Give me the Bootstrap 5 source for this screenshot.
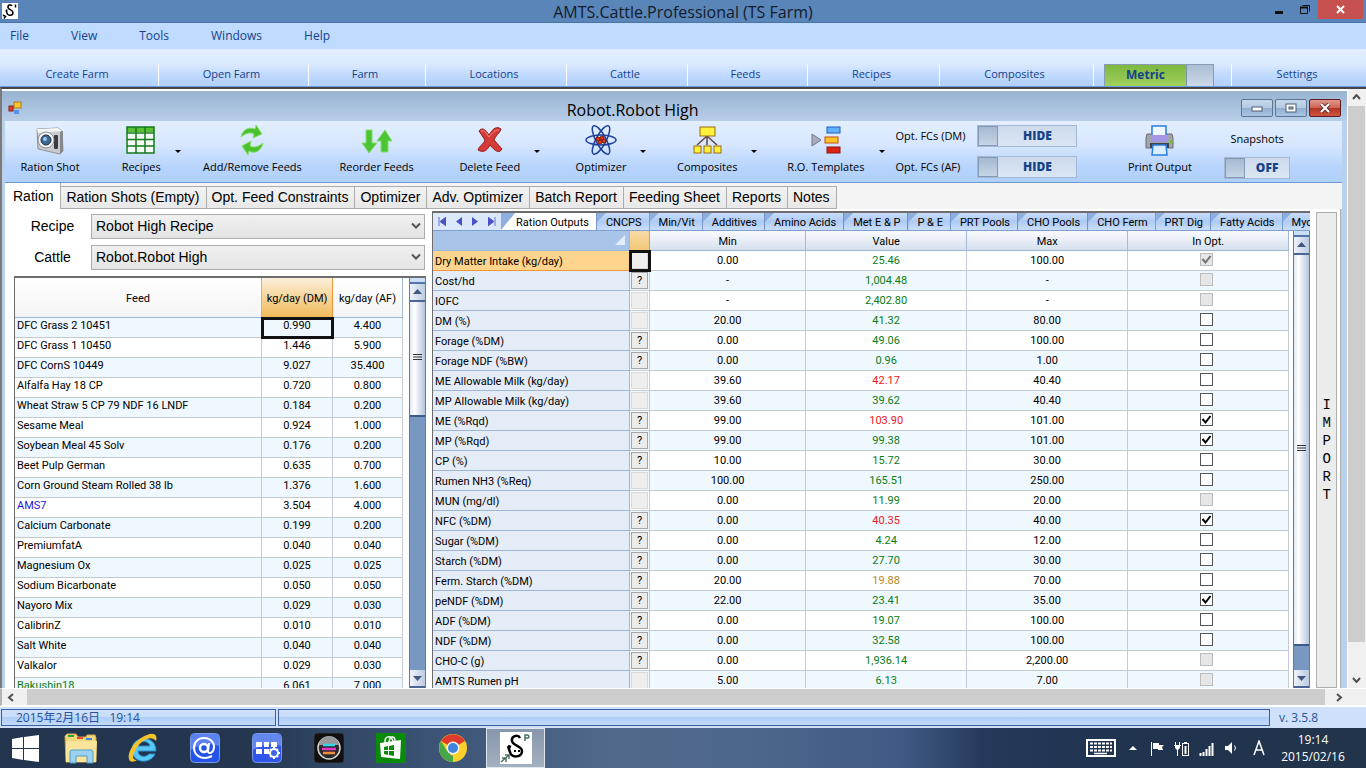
<!DOCTYPE html>
<html lang="en">
<head>
<meta charset="utf-8">
<meta name="viewport" content="width=device-width, initial-scale=1">
<title>AMTS.Cattle.Professional (TS Farm)</title>
<link rel="stylesheet" href="https://cdn.jsdelivr.net/npm/bootstrap@5.3.0/dist/css/bootstrap.min.css">
<style>
  :root { --ui: "Open Sans", "Noto Sans", "Noto Sans CJK JP", sans-serif; --tabs: "Liberation Sans", Arial, sans-serif; --grid: Roboto, "Liberation Sans", sans-serif; --navy: #15428b; }
  body { font-family: var(--ui); font-size: 12px; line-height: 16px; color: #000; background: #f0f0f0; }
  button { font: inherit; color: inherit; padding: 0; border: 0; background: none; }
  svg { display: block; }
  a { color: inherit; text-decoration: none; }

  .app-title { height: 23px; background: #5a85b9; border-bottom: 1px solid #4a74aa; }
  .app-title h1 { font: 16px/25px var(--ui); color: #101c2c; margin: 0; }
  .app-logo { left: 2px; top: 3px; }
  .app-controls { right: 3px; top: 0; }
  .app-controls button { width: 26px; height: 19px; display: grid; place-items: center; }
  .app-controls .app-close { width: 45px; background: #c75050; }

  .app-menu { height: 26px; background: #bfdbff; color: var(--navy); padding: 0 10px; gap: 42px; }
  .farm-bar { height: 39px; display: grid; grid-template-columns: 158fr 150fr 117fr 141fr 121fr 120fr 132fr 154fr 138fr 135fr; font-size: 11px;
    background: linear-gradient(#e3efff, #dbe9fe 40%, #c0dafe 70%, #b1d0fb); border-bottom: 1px solid #6e9cdb; color: var(--navy); }
  .farm-bar button { padding-top: 13px; padding-right: 4px; }
  .farm-bar > * + * { border-left: 1px solid; border-image: linear-gradient(transparent 40%, #fff 45%) 1; }
  .metric-cell { padding-left: 10px; }
  .farm-bar .metric-switch { width: 110px; height: 22px; background: linear-gradient(#7db83f, #a0d05c); border: 1px solid #8a9bb4; border-bottom: 0; font-weight: 700; font-size: 12px; }
  .metric-switch i { width: 27px; background: linear-gradient(#aabdd2, #ccd9e8); border-left: 1px solid #7e93ae; }

  .mdi { border-top: 2px solid #45464a; border-left: 2px solid #7a7a7a; background: #fff; padding-top: 2px; }
  .child { background: #b9d1ea; padding: 0 5px 0 3px; margin-right: 1px; }
  .child-title { height: 30px; background: linear-gradient(#98b3d1, #b7cee8); margin: 0 -5px 0 -3px; padding-right: 84px; }
  .child-title h2 { font: 16px/38px var(--ui); margin: 0; }
  .child-icon { left: 6px; top: 10px; }
  .child-controls { right: 6px; top: 8px; gap: 2px; }
  .child-controls button { width: 32px; height: 18px; display: grid; place-items: center; border: 1px solid #5d7594; border-radius: 2px;
    background: linear-gradient(#c6d8ec, #b4cae3 48%, #91aecf 50%, #a9c5e3); }
  .child-controls .child-close { background: linear-gradient(#e0978b, #cf6656 48%, #b23325 50%, #d0563f); border-color: #5b1d22; }

  .ribbon { height: 62px; display: grid; grid-template-columns: 90fr 92fr 130fr 118fr 108fr 114fr 98fr 139fr 200fr 128fr 66fr 52fr; font-size: 11px;
    background: linear-gradient(#e3efff, #d5e6fe 40%, #b7d4fd 75%, #afd0fb); border-bottom: 1px solid #6e9ad4; }
  .tool { display: flex; flex-direction: column; align-items: center; white-space: nowrap; padding-top: 3px; }
  .tool svg.pic { width: 34px; height: 32px; margin-bottom: 3px; }
  .tool .caret { position: absolute; left: 100%; top: -9px; margin-left: 14px; border: 3px solid transparent; border-top-color: #000; border-bottom: 0; }
  .opt-row { height: 31px; gap: 9px; white-space: nowrap; }
  .opt-row span { width: 73px; }
  .slide { width: 100px; height: 22px; border: 1px solid #a3b8d3; background: linear-gradient(#ccdaec, #dbe6f4); color: var(--navy); font-weight: 700; font-size: 12px; }
  .slide i { width: 20px; background: linear-gradient(#a4b9d1, #c6d5e7); border: 1px solid #8399b5; }
  .slide.short { width: 66px; }
  .snap-box { padding-top: 10px; }

  .main-tabs { height: 26px; background: #f4f4f4; padding-top: 3px; font: 14px/20px var(--tabs); }
  .main-tabs button { background: linear-gradient(#f2f2f2, #e8e8e8); border: 1px solid #acacac; border-left-width: 0; padding: 0 6px 0 5px; white-space: nowrap; height: 23px; }
  .main-tabs button.active { background: #fff; border: 0; border-right: 1px solid #acacac; padding: 0 7px 0 8px; height: 26px; margin-top: -3px; }

  .sheet { display: grid; grid-template-columns: 412fr 878fr 21px; column-gap: 6px; padding: 0 3px 0 9px; background: #fff; border-right: 1px solid #b0b0b0; margin-right: 1px; }
  .pickers { padding-top: 5px; }
  .picker { display: grid; grid-template-columns: 77px 1fr; align-items: center; font: 14px/20px var(--tabs); height: 25px; margin-bottom: 6px; padding-right: 1px; }
  .picker label { text-align: center; }
  .picker .form-select { font: inherit; height: 25px; padding: 0 20px 0 4px; border: 1px solid #acacac; border-radius: 0; color: #000;
    background: url("data:image/svg+xml,%3Csvg xmlns='http://www.w3.org/2000/svg' viewBox='0 0 10 8'%3E%3Cpath d='M1 1.500l4 4 4-4' fill='none' stroke='%23555' stroke-width='2'/%3E%3C/svg%3E") right 3px center/10px 8px no-repeat, linear-gradient(#f0f0f0, #e4e4e4); }

  .pane { border-top: 2px solid #6d6d6d; border-left: 1px solid #6d6d6d; }
  .output-pane { margin-top: 2px; }
  .data-grid { table-layout: fixed; width: 100%; border-collapse: separate; border-spacing: 0; font: 11px/15px var(--grid); }
  .data-grid td, .data-grid tbody th { height: 20px; padding: 0 0 3px; text-align: center; border-right: 1px solid #c4cbd4; border-bottom: 1px solid #c4cbd0; white-space: nowrap; font-weight: 400; background: #fff; }
  .data-grid thead th { font-weight: 400; text-align: center; border-right: 1px solid #a0bad8; border-bottom: 1px solid #9bb7d9; padding: 0; }
  .data-grid .picked { outline: 3px solid #111; outline-offset: -2px; position: relative; }
  .feeds thead th { height: 40px; background: linear-gradient(#fff, #f4f4f5); white-space: nowrap; padding-top: 3px; }
  .feeds thead th.hot { background: linear-gradient(#fbf0db, #f6d498 50%, #f1bb5c); border-right-color: #f29536; }
  .feeds tbody tr:nth-child(odd) td, .outputs tbody tr:nth-child(even) td { background: #eff7ff; }
  .feeds tbody td:first-child { text-align: left; padding-left: 2px; }
  .outputs thead th { height: 20px; background: linear-gradient(#f8fafd, #e8eef6 50%, #d4dfee); padding-top: 3px; }
  .outputs thead th.corner { background: #a9c4e9; padding: 0; }
  .outputs thead th.hot { background: linear-gradient(#f7dba6, #f3c777); border-right-color: #f29536; }
  .outputs tbody td { padding: 0; }
  .outputs tbody td:last-child { padding: 0 4px 2px 0; }
  .outputs tbody th { text-align: left; padding: 3px 0 0 2px; background: #e4ecf7; border-color: #9fb6d4; }
  .outputs tbody tr:first-child th { background: #ffd58d; border-bottom-color: #f29536; }
  .outputs td .hint { display: block; width: 17px; height: 17px; margin: 0 auto; background: #ebebeb; border: 1px solid #a5a5a5; line-height: 16px; }
  .outputs td .hint:disabled { border-color: #d8d8d8; background: #eee; }
  .outputs .form-check-input { display: block; width: 13px; height: 13px; margin: 0 auto; border: 1px solid #555; border-radius: 0; background-color: #fff; opacity: 1; }
  .outputs .form-check-input:checked { background: #fff url("data:image/svg+xml,%3Csvg xmlns='http://www.w3.org/2000/svg' viewBox='0 0 11 11'%3E%3Cpath d='M1.500 5l3 3.500L9.500 2' fill='none' stroke='%23000' stroke-width='2'/%3E%3C/svg%3E") center/11px no-repeat; }
  .outputs .form-check-input:disabled { background-color: #e6e6e6; border-color: #bcbcbc; }
  .outputs .form-check-input:disabled:checked { background-image: url("data:image/svg+xml,%3Csvg xmlns='http://www.w3.org/2000/svg' viewBox='0 0 11 11'%3E%3Cpath d='M1.500 5l3 3.500L9.500 2' fill='none' stroke='%23707070' stroke-width='2'/%3E%3C/svg%3E"); }
  .ok { color: #0a7d14; } .bad { color: #f01818; } .warn { color: #b8891c; }

  .strip { height: 18px; background: #8eafe0; font: 11px/17px var(--grid); border-bottom: 1px solid #7f9fd0; }
  .strip .step { width: 68px; background: #dbe8fa; }
  .strip .leaf { flex: none; padding: 1px 7px 0 9px; white-space: nowrap; height: 17px; background: linear-gradient(#c9dcfa, #aecbf4 50%, #cadefb); clip-path: polygon(9px 0, 100% 0, 100% 100%, 0 100%, 0 9px); border-right: 1px solid #7191c9; }
  .strip .leaf.active { background: #fff; padding-left: 15px; clip-path: polygon(14px 0, 100% 0, 100% 100%, 0 100%); }

  .vbar { width: 17px; background: #7898c1; border-left: 1px solid #5a7bb0; border-right: 1px solid #5a7bb0; }
  .vbar .nip { height: 6px; background: #c9def8; border-bottom: 2px solid #5575a8; }
  .vbar button { height: 18px; display: grid; place-items: center; background: linear-gradient(90deg, #eef3fb, #bccbe0); border-bottom: 2px solid #4a6596; }
  .vbar .thumb { background: linear-gradient(90deg, #dfe8f5, #fff 30%, #b4c4dc); border-bottom: 2px solid #3c5a8e; display: grid; place-items: center; }
  .import-btn { border: 1px solid #adadad; background: #ececec; font: 14px/18px "Liberation Mono", monospace; margin-top: 3px; }

  .page-v { width: 18px; margin-top: -2px; background: #f0f0f0; padding-right: 1px; }
  .page-v button { height: 17px; display: grid; place-items: center; }
  .page-v .rest { height: 46px; }
  .page-v .bar { background: #cdcdcd; }
  .page-h { height: 18px; background: #f0f0f0; border-top: 1px solid #fff; border-bottom: 1px solid #fff; border-left: 2px solid #b5b5b5; }
  .page-h button { width: 25px; display: grid; place-items: center; }
  .page-h .bar { background: #cdcdcd; }

  .app-status { display: grid; grid-template-columns: 275fr 993fr 94fr; height: 22px; padding: 2px 0 2px 1px; gap: 2px; background: #cfe1fa; color: #24539f; border-top: 1px solid #fff; }
  .app-status > div { border: 1px solid #3b5ea3; background: linear-gradient(#cfe0f8, #c8dcf8 45%, #aecdf7 50%, #c4dbfa); line-height: 15px; white-space: pre; }
  .app-status .stamp { padding-left: 14px; }
  .app-status .ver { border-color: transparent; padding-left: 6px; background: none; }

  .taskbar { height: 40px; color: #fff; background: linear-gradient(90deg, #22344e 0, #24374f 18%, #2f4563 24%, #3f587a 34%, #52698a 45%, #4b668c 56%, #3f5a84 66%, #26395a 72%, #203350 80%, #22344a); }
  .taskbar .start { width: 50px; height: 40px; display: grid; place-items: center; }
  .taskbar .pin { width: 62px; height: 40px; display: grid; place-items: center; }
  .taskbar .pin.running { width: 59px; margin-left: 2px; background: linear-gradient(#8797ab, #a3b0c0); border: 1px solid #dfe6ee; }
  .tray { padding-right: 19px; gap: 9px; }
  .tray .clock { font: 12px/17px var(--ui); text-align: center; width: 68px; }
</style>
</head>
<body>
<div class="vh-100 d-flex flex-column overflow-hidden">

  <header class="app-title position-relative text-center">
    <svg class="app-logo position-absolute" width="16" height="16" viewBox="0 0 32 32"><rect width="32" height="32" fill="#fff"/><path d="M20 6c-2-4-9-2-8 3s10 5 10 10c0 7-11 7-12 1l-2-6M8 14l3 1M27 3v6M2 24l5 3-3 4" fill="none" stroke="#000" stroke-width="3"/></svg>
    <h1>AMTS.Cattle.Professional (TS Farm)</h1>
    <div class="app-controls position-absolute d-flex">
      <button aria-label="Minimize"><svg width="10" height="10"><path d="M1 7.500h8" stroke="#111" stroke-width="3"/></svg></button>
      <button aria-label="Restore"><svg width="12" height="11"><path d="M1.500 3.500h7v6h-7zM3.500 1.500h7v6" fill="none" stroke="#111"/><path d="M1 3.500h8" stroke="#111" stroke-width="2"/></svg></button>
      <button class="app-close" aria-label="Close"><svg width="9" height="9"><path d="M1 1l7 7M8 1L1 8" stroke="#fff" stroke-width="2"/></svg></button>
    </div>
  </header>

  <nav class="app-menu d-flex align-items-center"><a href="#">File</a><a href="#">View</a><a href="#">Tools</a><a href="#">Windows</a><a href="#">Help</a></nav>

  <div class="farm-bar">
    <button>Create Farm</button><button>Open Farm</button><button>Farm</button><button>Locations</button><button>Cattle</button><button>Feeds</button><button>Recipes</button><button>Composites</button>
    <div class="metric-cell d-flex align-items-end"><button class="metric-switch d-flex p-0" role="switch" aria-checked="true"><span class="flex-fill lh-1 align-self-center">Metric</span><i class="align-self-stretch"></i></button></div>
    <button>Settings</button>
  </div>

  <main class="mdi flex-fill d-flex overflow-hidden">
    <section class="child flex-fill d-flex flex-column overflow-hidden">
      <div class="child-title position-relative text-center flex-shrink-0">
        <svg class="child-icon position-absolute" width="14" height="14"><rect x="6" y="1" width="7" height="6" fill="#fbc52c" stroke="#a9791a"/><rect x="1" y="5" width="4" height="5" fill="#d8402c" stroke="#8f1c12"/><rect x="6" y="9" width="5" height="4" fill="#5a92e8"/></svg>
        <h2>Robot.Robot High</h2>
        <div class="child-controls position-absolute d-flex">
          <button aria-label="Minimize"><svg width="12" height="8"><rect x="1" y="3" width="10" height="4" fill="#fff" stroke="#4c5c72"/></svg></button>
          <button aria-label="Maximize"><svg width="12" height="10"><rect x="1" y="1" width="10" height="8" fill="#fff" stroke="#4c5c72"/><rect x="4" y="4" width="4" height="2" fill="#9bb" stroke="#4c5c72"/></svg></button>
          <button class="child-close" aria-label="Close"><svg width="12" height="10"><path d="M2 1l8 8M10 1L2 9" stroke="#5c3434" stroke-width="4"/><path d="M2 1l8 8M10 1L2 9" stroke="#fff" stroke-width="2"/></svg></button>
        </div>
      </div>

      <div class="ribbon flex-shrink-0">
        <button class="tool">
          <svg class="pic" viewBox="0 0 34 32"><path d="M4 5l21-1 4 3 1 20-3 3L5 25z" fill="#c9cbce" stroke="#8e9196"/><path d="M4 5l21-1 4 3-24 2z" fill="#f3f4f4"/><path d="M27 8l3-1v20l-3 3z" fill="#85888d"/><rect x="21" y="11" width="4" height="14" rx="1" fill="#3b3d42"/><circle cx="13" cy="16" r="8" fill="#f1f2f4" stroke="#8e9196"/><circle cx="13" cy="16" r="5" fill="#3e6893" stroke="#222b36"/><circle cx="12" cy="15" r="2" fill="#9cc8ee"/></svg>Ration Shot</button>
        <button class="tool">
          <svg class="pic" viewBox="0 0 34 32"><rect x="3" y="3" width="27" height="26" fill="#f4fbf4"/><path d="M3 3h27v5H3z" fill="#58bf35"/><path d="M3 3h27v26H3zM3 9h27M3 15.500h27M3 22h27M12 3v26M21 3v26" fill="none" stroke="#137a1c" stroke-width="1.500"/></svg>
          <span class="position-relative">Recipes<i class="caret"></i></span></button>
        <button class="tool">
          <svg class="pic" viewBox="0 0 34 32"><path d="M6 13C8 4 15 3 20 5l1-4 6 9-9 4 1-4c-4-2-8-1-13 3zM28 19c-2 9-9 11-14 8l-1 4-6-9 9-5-1 5c4 2 8 1 13-3z" fill="#49c02e" stroke="#8be06c"/></svg>Add/Remove Feeds</button>
        <button class="tool">
          <svg class="pic" viewBox="0 0 34 32"><path d="M6 6h6v13h5L9 29 2 19h4zM21 28V17h-4l8-11 7 11h-4v11z" fill="#4bc435" stroke="#86dd6c"/></svg>Reorder Feeds</button>
        <button class="tool">
          <svg class="pic" viewBox="0 0 34 32"><path d="M6 7c3-4 6-2 10 4 4-7 8-9 12-6-1 4-6 7-7 11l8 9c-3 5-7 2-12-4-3 6-7 8-12 5 1-4 6-6 7-10z" fill="#d43a36" stroke="#94191b"/><path d="M8 7c3-1 5 1 8 6 4-5 6-7 10-7" fill="none" stroke="#ed8a84"/></svg>
          <span class="position-relative">Delete Feed<i class="caret"></i></span></button>
        <button class="tool">
          <svg class="pic" viewBox="0 0 34 32" fill="none" stroke="#1c3f9c" stroke-width="1.500"><ellipse cx="17" cy="16" rx="15" ry="5"/><ellipse cx="17" cy="16" rx="16" ry="5" transform="rotate(62 17 16)"/><ellipse cx="17" cy="16" rx="16" ry="5" transform="rotate(-62 17 16)"/><g fill="#e63a17" stroke="#7c1808" stroke-width="1"><circle cx="14" cy="15" r="2"/><circle cx="18" cy="14" r="2"/><circle cx="20" cy="17" r="2"/><circle cx="16" cy="18" r="2"/></g></svg>
          <span class="position-relative">Optimizer<i class="caret"></i></span></button>
        <button class="tool">
          <svg class="pic" viewBox="0 0 34 32"><path d="M17 12v9M17 12L7 21M17 12l10 9" stroke="#63443c" stroke-width="1.500"/><g fill="#fff13a" stroke="#9a6a12"><rect x="10" y="3" width="15" height="9"/><rect x="4" y="22" width="7" height="7"/><rect x="14" y="22" width="7" height="7"/><rect x="24" y="22" width="7" height="7"/></g></svg>
          <span class="position-relative">Composites<i class="caret"></i></span></button>
        <button class="tool">
          <svg class="pic" viewBox="0 0 34 32"><path d="M3 10l9 6-9 6z" fill="#a9acbc" stroke="#72768c"/><rect x="18" y="3" width="13" height="6" fill="#62b2ff" stroke="#1d5dbd"/><rect x="16" y="13" width="13" height="6" fill="#ffc425" stroke="#c94c12"/><rect x="18" y="23" width="13" height="6" fill="#dc2414" stroke="#8c1410"/></svg>
          <span class="position-relative">R.O. Templates<i class="caret"></i></span></button>
        <div class="d-flex flex-column">
          <div class="opt-row d-flex align-items-center"><span>Opt. FCs (DM)</span><button class="slide d-flex" role="switch" aria-checked="false" aria-label="Opt. FCs (DM)"><i class="align-self-stretch"></i><b class="flex-fill align-self-center">HIDE</b></button></div>
          <div class="opt-row d-flex align-items-center"><span>Opt. FCs (AF)</span><button class="slide d-flex" role="switch" aria-checked="false" aria-label="Opt. FCs (AF)"><i class="align-self-stretch"></i><b class="flex-fill align-self-center">HIDE</b></button></div>
        </div>
        <button class="tool">
          <svg class="pic" viewBox="0 0 34 32"><path d="M4 10h25l1 4v10H3V14z" fill="#a3a5aa" stroke="#6a6d74"/><rect x="9" y="2" width="14" height="10" fill="#eef6ff" stroke="#2c7de0" stroke-width="1.500"/><path d="M8 11h17v4q0 3-3 3H11q-3 0-3-3z" fill="#a497e6"/><rect x="7" y="19" width="19" height="5" fill="#3f434b"/><path d="M10 21h13l1 10H9z" fill="#d9eeff" stroke="#2c7de0" stroke-width="1.500"/><circle cx="28" cy="18" r="1.500" fill="#53d020"/></svg>Print Output</button>
        <div class="snap-box d-flex flex-column align-items-center justify-content-between"><label id="snap">Snapshots</label><button class="slide short d-flex mb-1" role="switch" aria-checked="false" aria-labelledby="snap"><i class="align-self-stretch"></i><b class="flex-fill align-self-center">OFF</b></button></div>
      </div>

      <div class="main-tabs d-flex flex-shrink-0" role="tablist">
        <button class="active" role="tab">Ration</button><button role="tab">Ration Shots (Empty)</button><button role="tab">Opt. Feed Constraints</button><button role="tab">Optimizer</button><button role="tab">Adv. Optimizer</button><button role="tab">Batch Report</button><button role="tab">Feeding Sheet</button><button role="tab">Reports</button><button role="tab">Notes</button>
      </div>

      <div class="sheet flex-fill overflow-hidden">
        <div class="pickers d-flex flex-column overflow-hidden">
          <div class="picker"><label for="recipe">Recipe</label><select id="recipe" class="form-select"><option>Robot High Recipe</option></select></div>
          <div class="picker"><label for="cattle">Cattle</label><select id="cattle" class="form-select"><option>Robot.Robot High</option></select></div>
          <div class="pane flex-fill d-flex overflow-hidden">
            <div class="flex-fill pe-2 overflow-hidden">
              <table class="data-grid feeds"><colgroup><col style="width:247px"><col style="width:71px"><col style="width:70px"></colgroup>
                <thead><tr><th>Feed</th><th class="hot">kg/day (DM)</th><th>kg/day (AF)</th></tr></thead><tbody id="feeds"></tbody></table>
            </div>
            <div class="vbar d-flex flex-column flex-shrink-0"><div class="nip"></div><button aria-label="Scroll up"><svg width="9" height="5"><path d="M0 5l4.500-5L9 5z" fill="#43587e"/></svg></button><div class="thumb" style="height:28%"><svg width="9" height="8"><path d="M0 .5h9M0 3h9M0 5.500h9" stroke="#333"/></svg></div><button class="mt-auto" aria-label="Scroll down"><svg width="9" height="5"><path d="M0 0l4.500 5L9 0z" fill="#43587e"/></svg></button></div>
          </div>
        </div>

        <div class="pane output-pane d-flex flex-column overflow-hidden">
          <div class="strip d-flex flex-shrink-0 overflow-hidden">
            <div class="step d-flex justify-content-around align-items-center flex-shrink-0">
              <button aria-label="First tab"><svg width="8" height="9"><path d="M1 0v9M8 0L2 4.500 8 9z" fill="#4a50c8" stroke="#4a50c8" stroke-width=".8"/></svg></button>
              <button aria-label="Previous tab"><svg width="6" height="9"><path d="M6 0L0 4.500 6 9z" fill="#4a50c8"/></svg></button>
              <button aria-label="Next tab"><svg width="6" height="9"><path d="M0 0l6 4.500L0 9z" fill="#4a50c8"/></svg></button>
              <button aria-label="Last tab"><svg width="8" height="9"><path d="M7 0v9M0 0l6 4.500L0 9z" fill="#4a50c8" stroke="#4a50c8" stroke-width=".8"/></svg></button>
            </div>
            <button class="leaf active">Ration Outputs</button><button class="leaf">CNCPS</button><button class="leaf">Min/Vit</button><button class="leaf">Additives</button><button class="leaf">Amino Acids</button><button class="leaf">Met E &amp; P</button><button class="leaf">P &amp; E</button><button class="leaf">PRT Pools</button><button class="leaf">CHO Pools</button><button class="leaf">CHO Ferm</button><button class="leaf">PRT Dig</button><button class="leaf">Fatty Acids</button><button class="leaf">Myo</button>
          </div>
          <div class="flex-fill d-flex overflow-hidden">
            <div class="flex-fill pe-1 overflow-hidden">
              <table class="data-grid outputs"><colgroup><col style="width:197px"><col style="width:20px"><col style="width:156px"><col style="width:161px"><col style="width:161px"><col style="width:161px"></colgroup>
                <thead><tr><th class="corner"><svg class="ms-auto me-1" width="10" height="10"><path d="M10 0v10H0z" fill="#e3eefc"/></svg></th><th class="hot"></th><th>Min</th><th>Value</th><th>Max</th><th>In Opt.</th></tr></thead><tbody id="outputs"></tbody></table>
            </div>
            <div class="vbar d-flex flex-column flex-shrink-0"><div class="nip"></div><button aria-label="Scroll up"><svg width="9" height="5"><path d="M0 5l4.500-5L9 5z" fill="#43587e"/></svg></button><div class="thumb flex-fill"><svg width="9" height="8"><path d="M0 .5h9M0 3h9M0 5.500h9" stroke="#333"/></svg></div><div class="pt-4"></div><button aria-label="Scroll down"><svg width="9" height="5"><path d="M0 0l4.500 5L9 0z" fill="#43587e"/></svg></button></div>
          </div>
        </div>
        <button class="import-btn">I<br>M<br>P<br>O<br>R<br>T</button>
      </div>
    </section>

    <div class="page-v d-flex flex-column flex-shrink-0"><button aria-label="Scroll up"><svg width="9" height="6"><path d="M1 5l3.500-4L8 5" fill="none" stroke="#505050" stroke-width="2"/></svg></button><div class="bar flex-fill"></div><div class="rest d-flex flex-column justify-content-end"><button aria-label="Scroll down"><svg width="9" height="6"><path d="M1 1l3.500 4L8 1" fill="none" stroke="#505050" stroke-width="2"/></svg></button></div></div>
  </main>

  <div class="page-h d-flex flex-shrink-0"><button aria-label="Scroll left"><svg class="me-2" width="7" height="9"><path d="M6 1L2 4.500 6 8" fill="none" stroke="#505050" stroke-width="2"/></svg></button><div class="bar flex-fill"></div><button class="me-3" aria-label="Scroll right"><svg class="ms-1" width="7" height="9"><path d="M1 1l4 3.500L1 8" fill="none" stroke="#505050" stroke-width="2"/></svg></button></div>

  <footer class="app-status flex-shrink-0"><div class="stamp">2015年2月16日   19:14</div><div class="note"></div><div class="ver">v. 3.5.8</div></footer>

  <nav class="taskbar d-flex flex-shrink-0 align-items-center">
    <button class="start" aria-label="Start"><svg width="27" height="27" viewBox="0 0 27 27" fill="#fff"><path d="M0 4l11-2v11H0zM12 2l15-2v13H12zM0 14h11v11L0 23zM12 14h15v13l-15-2z"/></svg></button>
    <button class="pin" aria-label="File Explorer"><svg width="34" height="32" viewBox="0 0 34 32"><path d="M1 4l2-2h9l2 3h8l1-2h8l1 3v24H2z" fill="#f3d67c" stroke="#d1a84c"/><path d="M4 3h6v2H4z" fill="#27a53b"/><path d="M13 5h6v2h-6z" fill="#df5132"/><path d="M22 6h6v2h-6z" fill="#3b86dc"/><path d="M2 9h31l-1 21H2z" fill="#f9e49a"/><path d="M6 20q0-2 2-2h19q2 0 2 2v11h-6v-7H12v7H6z" fill="#9bd2ef" stroke="#4e9cc9"/></svg></button>
    <button class="pin" aria-label="Internet Explorer"><svg width="32" height="32" viewBox="0 0 32 32"><path d="M29 19H11c0 6 8 7 11 3h6c-5 11-23 9-23-4C5 3 29 2 29 19zM11 14h12c-1-6-11-6-12 0z" fill="#5ac8f5" stroke="#2a8fd0"/><path d="M29 9c2-6-2-9-9-6C9 7 0 19 2 27c1 4 5 3 8 1-5 0-5-4-1-11C13 9 24 2 29 9z" fill="#f7c32b"/></svg></button>
    <button class="pin" aria-label="Mail"><svg width="30" height="30" viewBox="0 0 30 30"><rect x=".5" y=".5" width="29" height="29" rx="4" fill="#2453ea" stroke="#7b9ae6"/><path d="M1 4q0-3 3-3h22q3 0 3 3v9Q15 8 1 17z" fill="#5b82f0"/><circle cx="14" cy="15" r="4" fill="none" stroke="#fff" stroke-width="2.500"/><path d="M19 10l-1 8c0 4 6 2 6-4 0-6-5-9-10-9C8 5 4 9 4 15s5 10 11 10c3 0 5-1 7-2" fill="none" stroke="#fff" stroke-width="2"/></svg></button>
    <button class="pin" aria-label="Settings panel"><svg width="30" height="30" viewBox="0 0 30 30"><rect x=".5" y=".5" width="29" height="29" rx="4" fill="#2f55ea" stroke="#7b9ae6"/><path d="M1 4q0-3 3-3h22q3 0 3 3v9Q15 8 1 17z" fill="#6387ee"/><path d="M4 9h6v5H4zM12 9h5v5h-5zM19 9h6v5h-6zM4 16h6v5H4zM12 16h5v5h-5z" fill="#fff"/><circle cx="22" cy="20" r="4" fill="#3f62ea" stroke="#fff" stroke-width="2"/><path d="M22 14v2M22 24v2M16 20h2M26 20h2M18 16l1 1M25 23l1 1M26 16l-1 1M18 24l1-1" stroke="#fff" stroke-width="2"/></svg></button>
    <button class="pin" aria-label="Media"><svg width="30" height="30" viewBox="0 0 30 30"><rect width="30" height="30" rx="4" fill="#111" stroke="#333"/><circle cx="15" cy="15" r="11" fill="#2b2b2e" stroke="#d8d8d8" stroke-width="1.500"/><path d="M5 12a10 9 0 0120 0z" fill="#96989b"/><path d="M9 12h12" stroke="#36d5e4" stroke-width="2.500"/><path d="M8 16h14" stroke="#e830ca" stroke-width="2.500"/><path d="M9 20h12" stroke="#f0903a" stroke-width="2.500"/></svg></button>
    <button class="pin" aria-label="Store"><svg width="30" height="30" viewBox="0 0 30 30"><rect width="30" height="30" fill="#0a8a0a"/><path d="M4 10l21-3-1 19-19-2z" fill="#fff"/><path d="M9 10c-1-8 7-8 8-1M13 9c1-7 6-6 6-1" fill="none" stroke="#fff" stroke-width="1.500"/><path d="M8 14l4-1v4H8zM13 13l5-1v5h-5zM8 18h4v4l-4-1zM13 18h5v5l-5-1z" fill="#0a8a0a"/></svg></button>
    <button class="pin" aria-label="Chrome"><svg width="28" height="28" viewBox="0 0 28 28"><circle cx="14" cy="14" r="14" fill="#fbd02b"/><path d="M14 14L2 7a14 14 0 0124 0z" fill="#df3a2c"/><path d="M14 14v14A14 14 0 012 7l6 10 6 4z" fill="#45a64a"/><path d="M14 28l7-11-7-2-3 6 5 1z" fill="#fbd02b"/><circle cx="14" cy="14" r="6.500" fill="#f5f7f4"/><circle cx="14" cy="14" r="5" fill="#3f84dd"/></svg></button>
    <button class="pin running" aria-label="AMTS"><svg width="32" height="32" viewBox="0 0 32 32"><rect width="32" height="32" fill="#fff"/><path d="M20 6c-2-4-9-2-8 3s10 5 10 10c0 7-11 7-12 1l-2-6M8 14l3 1" fill="none" stroke="#000" stroke-width="2.500"/><path d="M14 19h2M18 19h2" stroke="#000" stroke-width="2"/><path d="M25 9V3h3q2 2 0 3h-3M1 30l8-7M2 26l4 0v4M5 23h4v4" fill="none" stroke="#4b7163" stroke-width="1.500"/></svg></button>
    <div class="tray ms-auto d-flex align-items-center">
      <svg class="me-1" width="30" height="18" viewBox="0 0 30 18"><rect x="1" y="1" width="28" height="16" fill="none" stroke="#fff" stroke-width="2"/><path d="M4 4.500h22M4 8h22M4 11.500h22" stroke="#fff" stroke-width="2" stroke-dasharray="3 1"/><path d="M8 14.500h13" stroke="#fff" stroke-width="1.500"/></svg>
      <svg class="me-1" width="8" height="4"><path d="M0 4l4-4 4 4z" fill="#fff"/></svg>
      <svg width="15" height="15"><path d="M1.500 1v14" stroke="#fff"/><path d="M3 2h6v2h5l-2 2 1 3H8V8H3z" fill="#fff"/></svg>
      <svg width="16" height="15"><path d="M1.500 1v4M5.500 1v4M0 4.500h7M3.500 8v7" stroke="#fff"/><path d="M1 5h5v2L4 9H3L1 7z" fill="#fff"/><rect x="8.500" y="2.500" width="6" height="12" fill="none" stroke="#fff"/><path d="M10 1.500h3" stroke="#fff"/><path d="M11.500 5v8" stroke="#fff" stroke-width="2"/></svg>
      <svg width="16" height="15"><path d="M1.500 15v-3M4.500 15v-4M7.500 15V8M10.500 15V5M13.500 15V2" stroke="#fff" stroke-width="2"/></svg>
      <svg width="15" height="14"><path d="M1 5h3l4-4v12L4 9H1z" fill="#fff"/><path d="M10.500 4.500q2 2.500 0 5" fill="none" stroke="#fff"/></svg>
      <svg class="ms-1" width="14" height="16"><path d="M2 15L7 1l5 14M4 10h6" fill="none" stroke="#fff" stroke-width="1.500"/></svg>
      <div class="clock ms-1">19:14<br>2015/02/16</div>
    </div>
  </nav>
</div>

<script>
  const feeds = [
    ['DFC Grass 2 10451','0.990','4.400'],['DFC Grass 1 10450','1.446','5.900'],['DFC CornS 10449','9.027','35.400'],['Alfalfa Hay 18 CP','0.720','0.800'],
    ['Wheat Straw 5 CP 79 NDF 16 LNDF','0.184','0.200'],['Sesame Meal','0.924','1.000'],['Soybean Meal 45 Solv','0.176','0.200'],['Beet Pulp German','0.635','0.700'],
    ['Corn Ground Steam Rolled 38 lb','1.376','1.600'],['AMS7','3.504','4.000','#1818d8'],['Calcium Carbonate','0.199','0.200'],['PremiumfatA','0.040','0.040'],
    ['Magnesium Ox','0.025','0.025'],['Sodium Bicarbonate','0.050','0.050'],['Nayoro Mix','0.029','0.030'],['CalibrinZ','0.010','0.010'],
    ['Salt White','0.040','0.040'],['Valkalor','0.029','0.030'],['Bakushin18','6.061','7.000','#0a7d14']];
  document.getElementById('feeds').innerHTML = feeds.map((f, i) =>
    `<tr><td${f[3] ? ` style="color:${f[3]}"` : ''}>${f[0]}</td><td${i ? '' : ' class="picked"'}>${f[1]}</td><td>${f[2]}</td></tr>`).join('');

  // name, has a hint button, min, value, value state, max, check box: 0 off, 1 on, 2 disabled, 3 disabled and on
  const outputs = [
    ['Dry Matter Intake (kg/day)',0,'0.00','25.46','ok','100.00',3],['Cost/hd',1,'-','1,004.48','ok','-',2],['IOFC',0,'-','2,402.80','ok','-',2],
    ['DM (%)',0,'20.00','41.32','ok','80.00',0],['Forage (%DM)',1,'0.00','49.06','ok','100.00',0],['Forage NDF (%BW)',1,'0.00','0.96','ok','1.00',0],
    ['ME Allowable Milk (kg/day)',0,'39.60','42.17','bad','40.40',0],['MP Allowable Milk (kg/day)',0,'39.60','39.62','ok','40.40',0],
    ['ME (%Rqd)',1,'99.00','103.90','bad','101.00',1],['MP (%Rqd)',1,'99.00','99.38','ok','101.00',1],['CP (%)',1,'10.00','15.72','ok','30.00',0],
    ['Rumen NH3 (%Req)',0,'100.00','165.51','ok','250.00',0],['MUN (mg/dl)',0,'0.00','11.99','ok','20.00',2],['NFC (%DM)',1,'0.00','40.35','bad','40.00',1],
    ['Sugar (%DM)',1,'0.00','4.24','ok','12.00',0],['Starch (%DM)',1,'0.00','27.70','ok','30.00',0],['Ferm. Starch (%DM)',1,'20.00','19.88','warn','70.00',0],
    ['peNDF (%DM)',1,'22.00','23.41','ok','35.00',1],['ADF (%DM)',1,'0.00','19.07','ok','100.00',0],['NDF (%DM)',1,'0.00','32.58','ok','100.00',0],
    ['CHO-C (g)',1,'0.00','1,936.14','ok','2,200.00',2],['AMTS Rumen pH',0,'5.00','6.13','ok','7.00',2]];
  document.getElementById('outputs').innerHTML = outputs.map((o, i) =>
    `<tr><th scope="row">${o[0]}</th><td${i ? '' : ' class="picked"'}><button class="hint" aria-label="About ${o[0]}"${o[1] ? '' : ' disabled'}>${o[1] ? '?' : ''}</button></td>
     <td>${o[2]}</td><td class="${o[4]}">${o[3]}</td><td>${o[5]}</td>
     <td><input class="form-check-input" type="checkbox" aria-label="${o[0]} in optimizer"${o[6] & 1 ? ' checked' : ''}${o[6] & 2 ? ' disabled' : ''}></td></tr>`).join('');
</script>
<script src="https://cdn.jsdelivr.net/npm/bootstrap@5.3.0/dist/js/bootstrap.bundle.min.js"></script>
</body>
</html>
